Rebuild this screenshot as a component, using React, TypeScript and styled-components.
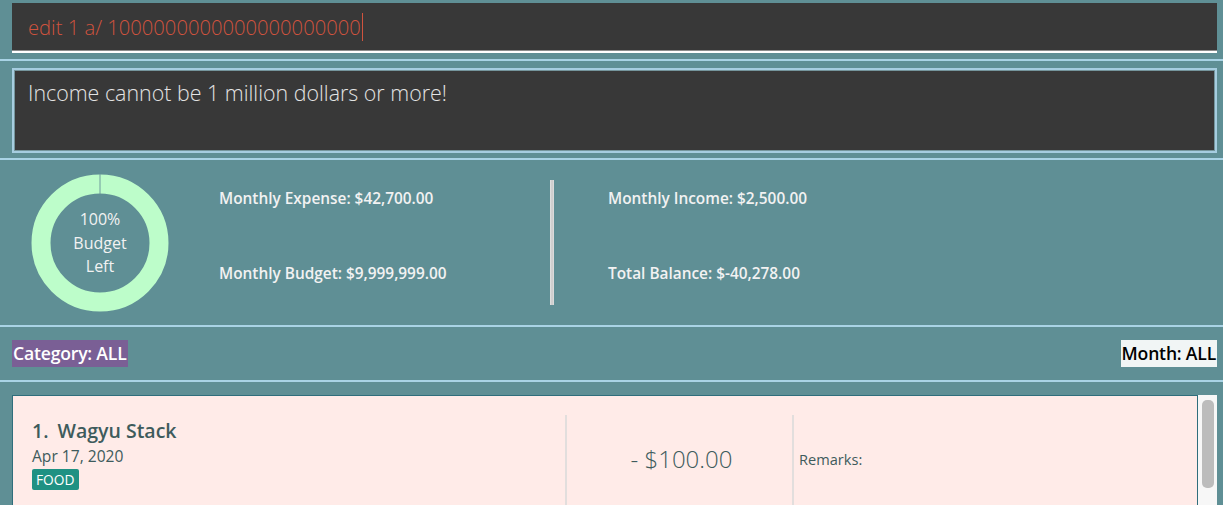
import React from "react";
import styled, { createGlobalStyle } from "styled-components";

const GlobalStyle = createGlobalStyle`
  html, body { margin: 0; padding: 0; background: #5f8f95; }
  body { font-family: "Open Sans", "Segoe UI", sans-serif; overflow: hidden; }
  #root { width: 1223px; height: 505px; }
  * { box-sizing: border-box; }
`;

const Page = styled.div`
  width: 1223px;
  height: 505px;
  display: flex;
  flex-direction: column;
  background: #5f8f95;
  overflow: hidden;
`;

const Separator = styled.div`
  height: 2px;
  flex: none;
  background: #a9d3e5;
`;

const CommandArea = styled.div`
  flex: none;
  height: 59px;
  padding: 3px 6px 0 12px;
`;

const CommandBox = styled.div`
  height: 50px;
  background: #383838;
  border-bottom: 2px solid #ffffff;
  box-shadow: inset 0 -1px 0 #8c8c8c;
  display: flex;
  align-items: center;
  padding: 0 0 0 16px;
`;

const CommandText = styled.span`
  font-family: "Open Sans", sans-serif;
  font-weight: 300;
  font-size: 20.2px;
  color: #d0533e;
`;

const Caret = styled.span`
  display: inline-block;
  width: 1px;
  height: 28px;
  margin-left: 1px;
  background: #d0533e;
`;

const ResultArea = styled.div`
  flex: none;
  height: 97px;
  padding: 7px 6px 5px 12px;
`;

const ResultBox = styled.div`
  height: 85px;
  background: #383838;
  border: 2px solid #a6cde0;
  box-shadow: inset 0 0 0 1px #75959c;
  padding: 8px 14px;
  font-family: "Open Sans", sans-serif;
  font-weight: 300;
  font-size: 21.4px;
  color: #e4e4e4;
`;

const Stats = styled.div`
  flex: none;
  height: 165px;
  display: flex;
  align-items: center;
  padding-left: 31px;
`;

const Donut = styled.div`
  display: grid;
  width: 138px;
  height: 138px;
  flex: none;
  & > * { grid-area: 1 / 1; }
`;

const DonutLabel = styled.div`
  align-self: center;
  justify-self: center;
  text-align: center;
  color: #f2f2f2;
  font-size: 16px;
  line-height: 23.5px;
  padding-top: 2px;
`;

const StatColumn = styled.div<{ $left: number; $width: number }>`
  margin-left: ${(p) => p.$left}px;
  width: ${(p) => p.$width}px;
  height: 165px;
  display: flex;
  flex-direction: column;
  justify-content: space-between;
  padding: 28px 0 41px;
  flex: none;
`;

const StatText = styled.div`
  color: #f2f2f2;
  font-weight: 600;
  font-size: 15.4px;
  line-height: 21px;
`;

const StatDivider = styled.div`
  width: 4px;
  height: 125px;
  flex: none;
  background: linear-gradient(90deg, #e6e6e6, #c8c8c8 50%, #e0e0e0);
  align-self: flex-start;
  margin-top: 20px;
`;

const FilterRow = styled.div`
  flex: none;
  height: 53px;
  display: flex;
  justify-content: space-between;
  align-items: flex-start;
  padding: 13px 6px 0 12px;
`;

const Chip = styled.div<{ $bg: string; $fg: string }>`
  height: 27px;
  line-height: 27px;
  background: ${(p) => p.$bg};
  color: ${(p) => p.$fg};
  font-weight: 600;
  font-size: 17.6px;
  padding: 0 1px;
  letter-spacing: -0.2px;
`;

const ListArea = styled.div`
  flex: 1;
  display: flex;
  padding: 13px 6px 0 12px;
  min-height: 0;
`;

const Card = styled.div`
  flex: 1;
  background: #ffebe8;
  border: 1px solid #2f6e7c;
  border-bottom: none;
  display: flex;
  padding-top: 19px;
  color: #3e5b5c;
`;

const MainCell = styled.div`
  width: 552px;
  flex: none;
  padding: 4px 0 0 19px;
`;

const Title = styled.div`
  font-weight: 600;
  font-size: 19.5px;
  line-height: 24px;
`;

const Index = styled.span`
  margin-right: 9px;
`;

const DateText = styled.div`
  font-size: 15.6px;
  line-height: 22px;
  margin-top: 2px;
`;

const Tag = styled.div`
  display: inline-block;
  height: 21px;
  background: #1f9183;
  color: #ffffff;
  font-size: 13.8px;
  line-height: 21px;
  padding: 0 4px;
  border-radius: 2px;
  margin-top: 2px;
`;

const CellDivider = styled.div`
  width: 2px;
  flex: none;
  height: 100px;
  background: #e2dedd;
`;

const AmountCell = styled.div`
  width: 225px;
  flex: none;
  display: flex;
  justify-content: center;
  padding-top: 29px;
  padding-left: 4px;
  font-weight: 300;
  font-size: 24px;
  line-height: 30px;
`;

const RemarksCell = styled.div`
  flex: 1;
  padding: 34px 0 0 5px;
  font-size: 14.6px;
  line-height: 20px;
`;

const ScrollTrack = styled.div`
  width: 19px;
  flex: none;
  background: #f7f7f7;
  padding: 5px 3px 0 4px;
`;

const ScrollThumb = styled.div`
  height: 88px;
  background: #bcbcbc;
  border-radius: 5px;
`;

function DonutChart() {
  return (
    <svg width="138" height="138" viewBox="0 0 138 138">
      <circle cx="69" cy="69" r="59" fill="none" stroke="#bdfdca" strokeWidth="19" />
      <line x1="69" y1="0" x2="69" y2="20" stroke="#6e9a9c" strokeWidth="1" />
    </svg>
  );
}

export default function App() {
  return (
    <Page>
      <GlobalStyle />
      <CommandArea>
        <CommandBox>
          <CommandText>edit 1 a/ 1000000000000000000000</CommandText>
          <Caret />
        </CommandBox>
      </CommandArea>
      <Separator />
      <ResultArea>
        <ResultBox>Income cannot be 1 million dollars or more!</ResultBox>
      </ResultArea>
      <Separator />
      <Stats>
        <Donut>
          <DonutChart />
          <DonutLabel>
            100%
            <br />
            Budget
            <br />
            Left
          </DonutLabel>
        </Donut>
        <StatColumn $left={50} $width={331}>
          <StatText>Monthly Expense: $42,700.00</StatText>
          <StatText>Monthly Budget: $9,999,999.00</StatText>
        </StatColumn>
        <StatDivider />
        <StatColumn $left={54} $width={400}>
          <StatText>Monthly Income: $2,500.00</StatText>
          <StatText>Total Balance: $-40,278.00</StatText>
        </StatColumn>
      </Stats>
      <Separator />
      <FilterRow>
        <Chip $bg="#7a5f95" $fg="#ffffff">Category: ALL</Chip>
        <Chip $bg="#f1f5f5" $fg="#000000">Month: ALL</Chip>
      </FilterRow>
      <Separator />
      <ListArea>
        <Card>
          <MainCell>
            <Title>
              <Index>1.</Index>Wagyu Stack
            </Title>
            <DateText>Apr 17, 2020</DateText>
            <Tag>FOOD</Tag>
          </MainCell>
          <CellDivider />
          <AmountCell>- $100.00</AmountCell>
          <CellDivider />
          <RemarksCell>Remarks:</RemarksCell>
        </Card>
        <ScrollTrack>
          <ScrollThumb />
        </ScrollTrack>
      </ListArea>
    </Page>
  );
}
